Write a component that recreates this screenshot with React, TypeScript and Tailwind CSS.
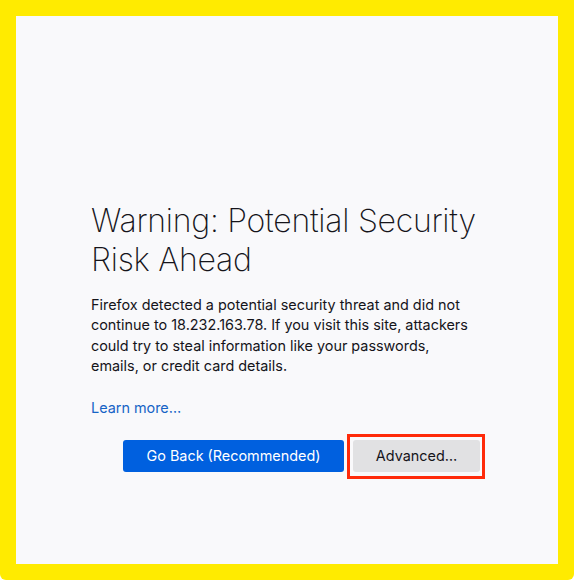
export default function App() {
  return (
    <div className="h-[580px] w-[574px] bg-[#ffeb00] p-4 rounded-b-[6px]">
      <div className="h-[548px] w-[542px] bg-[#f9f9fb] pl-[75px] pt-[185px] font-['Inter',sans-serif]">
        <div className="w-[390px]">
          <h1 className="text-[32px] leading-[39px] font-extralight text-[#15141a] tracking-[-0.25px]">
            Warning: Potential Security Risk Ahead
          </h1>
          <p className="mt-[16px] w-[382px] text-[14.4px] leading-[20.4px] text-[#15141a]">
            Firefox detected a potential security threat and did not continue to 18.232.163.78. If you visit this site, attackers could try to steal information like your passwords, emails, or credit card details.
          </p>
          <a className="mt-[21px] block text-[14.4px] leading-5 text-[#1664c6]">Learn more…</a>
          <div className="mt-[22px] flex justify-end gap-[9px] pr-[1px]">
            <button className="h-8 w-[221px] rounded-[3px] bg-[#0060df] text-[14.4px] text-white">
              Go Back (Recommended)
            </button>
            <div className="relative">
              <button className="h-8 w-[127px] rounded-[3px] bg-[#e1e1e3] text-[14.4px] text-[#15141a]">
                Advanced…
              </button>
              <span className="absolute -left-[6px] -right-[5px] -top-[6px] -bottom-[7px] border-[3.5px] border-[#ff2a0a]" />
            </div>
          </div>
        </div>
      </div>
    </div>
  );
}
